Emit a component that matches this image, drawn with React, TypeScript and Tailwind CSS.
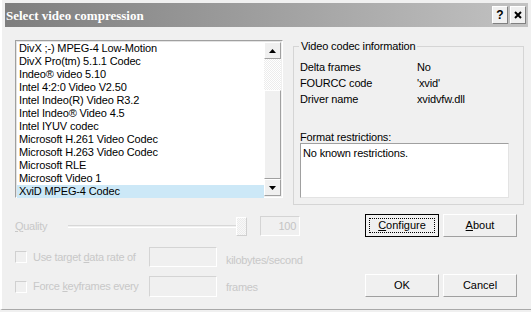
import React from "react";

const codecs = [
  "DivX ;-) MPEG-4 Low-Motion",
  "DivX Pro(tm) 5.1.1 Codec",
  "Indeo® video 5.10",
  "Intel 4:2:0 Video V2.50",
  "Intel Indeo(R) Video R3.2",
  "Intel Indeo® Video 4.5",
  "Intel IYUV codec",
  "Microsoft H.261 Video Codec",
  "Microsoft H.263 Video Codec",
  "Microsoft RLE",
  "Microsoft Video 1",
  "XviD MPEG-4 Codec",
];

const ui = "font-['Liberation_Sans',Arial,sans-serif] text-[11px] leading-[13px]";

function Arrow({ up }: { up?: boolean }) {
  return (
    <svg width="7" height="4" viewBox="0 0 7 4">
      <path d={up ? "M3.5 0L7 4H0Z" : "M0 0H7L3.5 4Z"} fill="#000" />
    </svg>
  );
}

function ScrollButton({ up }: { up?: boolean }) {
  return (
    <div className="w-[17px] h-[17px] flex items-center justify-center bg-[#f0f0f0] border border-t-white border-l-white border-r-[#a0a0a0] border-b-[#a0a0a0]">
      <Arrow up={up} />
    </div>
  );
}

function Field({ w, h, children }: { w: string; h: string; children?: React.ReactNode }) {
  return (
    <div
      className={`${w} ${h} shrink-0 border border-t-[#d4d4d4] border-l-[#d4d4d4] border-r-white border-b-white bg-[#f0f0f0] flex items-center justify-end pr-[3px] text-[#c4c4c4]`}
    >
      {children}
    </div>
  );
}

function Check() {
  return (
    <div className="w-[12px] h-[12px] shrink-0 border border-t-[#d0d0d0] border-l-[#d0d0d0] border-r-white border-b-white bg-[#f0f0f0]" />
  );
}

function Button({ children, focused }: { children: React.ReactNode; focused?: boolean }) {
  return (
    <div
      className={`w-[74px] h-[23px] flex items-center justify-center bg-[#f0f0f0] ${
        focused ? "border border-black" : "border border-t-white border-l-white border-r-[#a0a0a0] border-b-[#a0a0a0]"
      }`}
    >
      {focused ? (
        <div className="w-[66px] h-[15px] border border-dotted border-black flex items-center justify-center">
          {children}
        </div>
      ) : (
        children
      )}
    </div>
  );
}

export default function App() {
  return (
    <div className={`w-[531px] h-[312px] bg-[#f0f0f0] ${ui} text-black overflow-hidden`}>
      <div className="h-[310px] border-b border-[#a9a9a9] pt-[3px] px-[3px] bg-[#f0f0f0] border-l-2 border-l-white">
        {/* Title bar */}
        <div className="h-[24px] bg-gradient-to-r from-[#7e7e7e] to-[#c2c2c2] flex items-center justify-between pl-[1px] pr-[2px]">
          <span className="font-['Liberation_Serif','Times_New_Roman',serif] font-bold text-[13px] text-white">
            Select video compression
          </span>
          <div className="flex gap-[2px] items-center">
            <div className="w-[16px] h-[18px] bg-[#f0f0f0] border border-t-white border-l-white border-r-[#808080] border-b-[#808080] flex items-center justify-center font-['Liberation_Sans',Arial,sans-serif] font-bold text-[12px]">
              ?
            </div>
            <div className="w-[16px] h-[18px] bg-[#f0f0f0] border border-t-white border-l-white border-r-[#808080] border-b-[#808080] flex items-center justify-center">
              <svg width="8" height="8" viewBox="0 0 8 8">
                <path d="M1 1L7 7M7 1L1 7" stroke="#000" strokeWidth="2" />
              </svg>
            </div>
          </div>
        </div>

        <div className="pl-[10px]">
          {/* Top row */}
          <div className="flex">
            {/* Listbox */}
            <div className="mt-[13px] w-[268px] h-[158px] shrink-0 border border-t-[#a0a0a0] border-l-[#a0a0a0] border-r-white border-b-white">
              <div className="h-full bg-white border border-t-[#e3e3e3] border-l-[#e3e3e3] border-r-[#f0f0f0] border-b-[#f0f0f0] flex">
                <div className="flex-1">
                  {codecs.map((c, i) => (
                    <div
                      key={c}
                      className={`h-[13px] pl-[2px] whitespace-nowrap tracking-[-0.15px] ${
                        i === codecs.length - 1 ? "bg-[#cce8f7]" : ""
                      }`}
                    >
                      {c}
                    </div>
                  ))}
                </div>
                <div className="w-[17px] flex flex-col">
                  <ScrollButton up />
                  <div className="h-[31px] bg-[repeating-conic-gradient(#ececec_0_25%,#ffffff_0_50%)] bg-[length:2px_2px]" />
                  <div className="flex-1 bg-[#f0f0f0] border border-t-white border-l-white border-r-[#a0a0a0] border-b-[#a0a0a0]" />
                  <ScrollButton />
                </div>
              </div>
            </div>

            {/* Group box */}
            <div className="ml-[10px] mt-[19px] w-[231px] h-[159px] shrink-0 border border-[#d5d5d5] relative">
              <span className="absolute -top-[7px] left-[5px] px-[2px] bg-[#f0f0f0] tracking-[-0.15px]">
                Video codec information
              </span>
              <div className="pl-[6px] pt-[12px] tracking-[-0.15px]">
                <div className="flex h-[16px] items-center">
                  <span className="w-[117px]">Delta frames</span>
                  <span>No</span>
                </div>
                <div className="flex h-[16px] items-center">
                  <span className="w-[117px]">FOURCC code</span>
                  <span>'xvid'</span>
                </div>
                <div className="flex h-[16px] items-center">
                  <span className="w-[117px]">Driver name</span>
                  <span>xvidvfw.dll</span>
                </div>
                <div className="mt-[24px] h-[12px] leading-[12px]">Format restrictions:</div>
                <div className="w-[209px] h-[55px] bg-white border border-t-[#a0a0a0] border-l-[#a0a0a0] border-r-[#e3e3e3] border-b-[#e3e3e3] pl-[2px] pt-[3px]">
                  No known restrictions.
                </div>
              </div>
            </div>
          </div>

          {/* Bottom area */}
          <div className="flex">
            <div className="w-[350px] shrink-0 text-[#c8c8c8] tracking-[-0.3px]">
              <div className="mt-[11px] h-[20px] flex items-center">
                <span className="w-[53px] shrink-0">
                  <u>Q</u>uality
                </span>
                <div className="relative w-[180px] h-[20px] shrink-0 flex items-center">
                  <div className="w-[172px] h-[3px] border-t border-t-[#d8d8d8] border-b border-b-white" />
                  <div className="absolute left-[168px] top-[1px] w-[11px] h-[19px] border border-t-white border-l-white border-r-[#d0d0d0] border-b-[#d0d0d0] bg-[repeating-conic-gradient(#ececec_0_25%,#f8f8f8_0_50%)] bg-[length:2px_2px]" />
                </div>
                <div className="ml-[12px]">
                  <Field w="w-[40px]" h="h-[20px]">100</Field>
                </div>
              </div>
              <div className="mt-[11px] h-[20px] flex items-center">
                <Check />
                <span className="ml-[6px] w-[116px] shrink-0">
                  Use target <u>d</u>ata rate of
                </span>
                <Field w="w-[68px]" h="h-[20px]" />
                <span className="ml-[9px] mt-[6px] whitespace-nowrap">kilobytes/second</span>
              </div>
              <div className="mt-[9px] h-[21px] flex items-center">
                <Check />
                <span className="ml-[6px] w-[116px] shrink-0">
                  Force <u>k</u>eyframes every
                </span>
                <Field w="w-[68px]" h="h-[21px]" />
                <span className="ml-[9px] mt-[2px]">frames</span>
              </div>
            </div>

            <div className="pt-[9px]">
              <div className="flex gap-[4px]">
                <Button focused>
                  <u>C</u>onfigure
                </Button>
                <Button>
                  <u>A</u>bout
                </Button>
              </div>
              <div className="flex gap-[4px] mt-[37px]">
                <Button>OK</Button>
                <Button>Cancel</Button>
              </div>
            </div>
          </div>
        </div>
      </div>
    </div>
  );
}
